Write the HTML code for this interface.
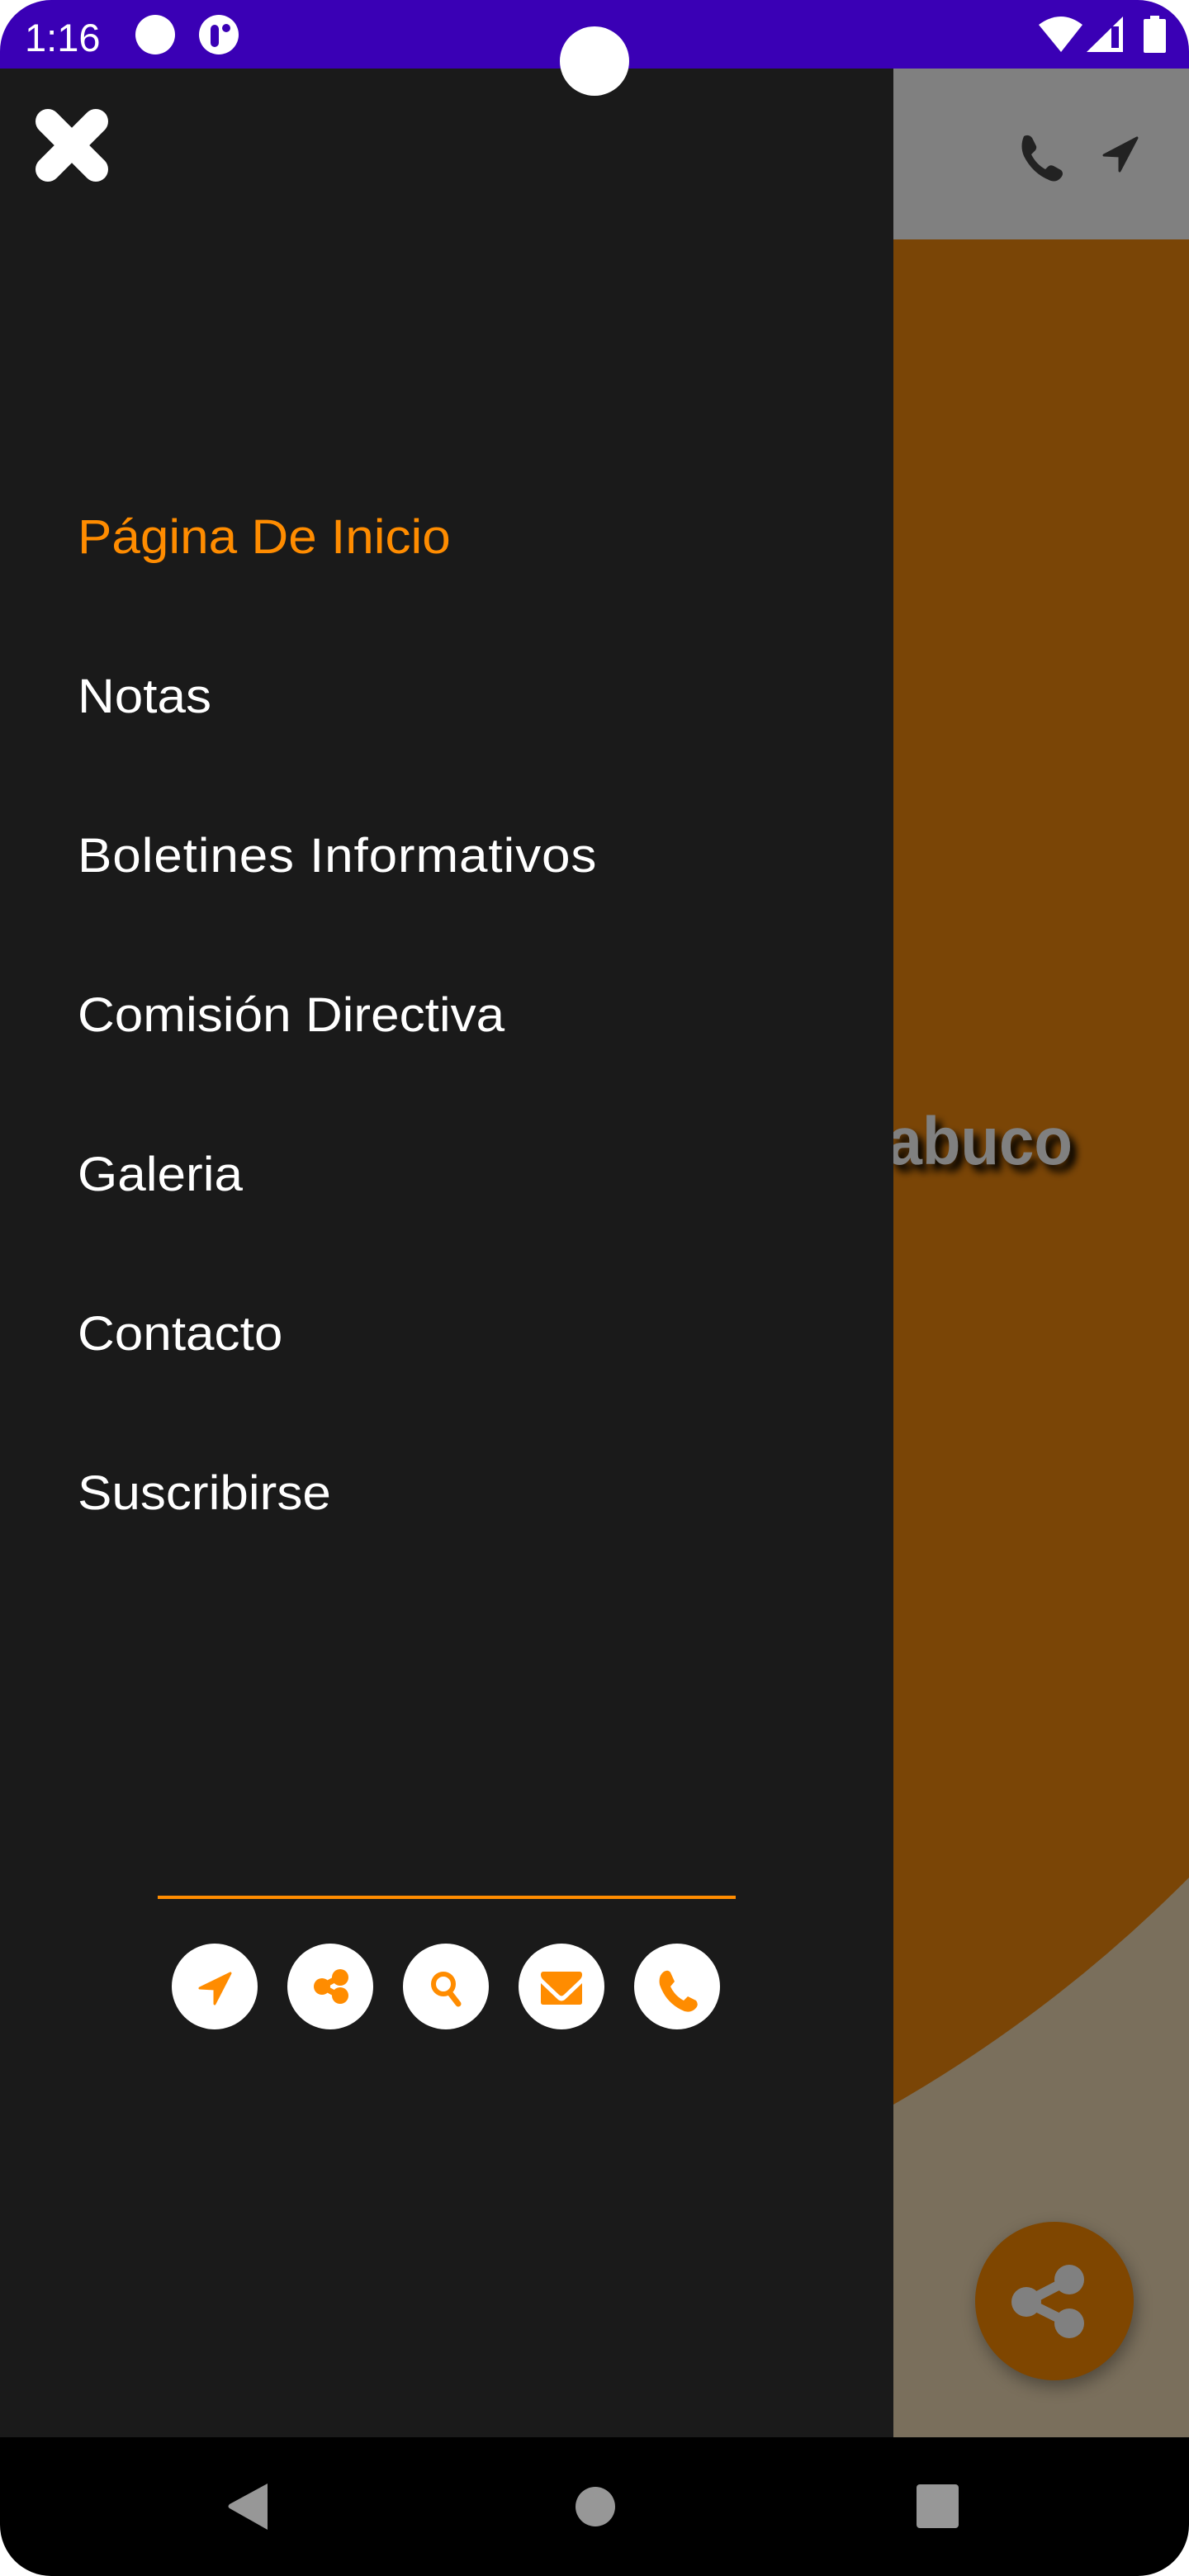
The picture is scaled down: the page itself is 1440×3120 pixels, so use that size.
<!DOCTYPE html>
<html><head><meta charset="utf-8"><style>
html,body{margin:0;padding:0;background:#fff;width:1440px;height:3120px;overflow:hidden}
svg{display:block}
</style></head><body>
<svg width="1440" height="3120" viewBox="0 0 1440 3120" xmlns="http://www.w3.org/2000/svg">
<defs>
<filter id="sh" x="-20%" y="-20%" width="140%" height="160%"><feGaussianBlur stdDeviation="5"/></filter>
<filter id="fs" x="-50%" y="-50%" width="200%" height="200%"><feGaussianBlur stdDeviation="10"/></filter>
<clipPath id="scr"><rect x="0" y="0" width="1440" height="3120" rx="62" ry="62"/></clipPath>
</defs>
<g clip-path="url(#scr)">
<rect x="0" y="83" width="1440" height="2870" fill="#7a6f5c"/>
<path d="M1082,290 L1440,290 L1440,2274 A1700 1700 0 0 1 1082,2549 Z" fill="#7a4506"/>
<rect x="1082" y="83" width="358" height="207" fill="#808080"/>
<path d="M1240,165 q6,-3 10,2 l5,10 q1,4 -3,7 l-3,3 q6,12 17,18 l3,-3 q3,-3 7,-1 l9,5 q4,4 0,9 q-5,6 -12,4 q-22,-8 -33,-30 q-5,-12 0,-24z" fill="#222"/>
<path d="M1337,188 L1377,167 L1356,207 L1356,189 Z" fill="#222" stroke="#222" stroke-width="3" stroke-linejoin="round"/>
<g transform="translate(1299,1410) scale(0.93,1)">
<text x="8" y="8" text-anchor="end" font-family="Liberation Sans, sans-serif" font-weight="bold" font-size="82" fill="#000" filter="url(#sh)">abuco</text>
<text x="0" y="0" text-anchor="end" font-family="Liberation Sans, sans-serif" font-weight="bold" font-size="82" fill="#808080">abuco</text>
</g>
<circle cx="1280" cy="2795" r="96" fill="#000" opacity="0.35" filter="url(#fs)"/>
<circle cx="1277" cy="2787" r="96" fill="#7f4600"/>
<g fill="#808080" stroke="#808080">
<line x1="1243" y1="2788" x2="1295" y2="2761" stroke-width="12"/>
<line x1="1243" y1="2788" x2="1295" y2="2814" stroke-width="12"/>
<circle cx="1295" cy="2761" r="18" stroke="none"/>
<circle cx="1243" cy="2788" r="18" stroke="none"/>
<circle cx="1295" cy="2814" r="18" stroke="none"/>
</g>
<rect x="0" y="83" width="1082" height="2870" fill="#1a1a1a"/>
<line x1="58" y1="147" x2="116" y2="205" stroke="#fff" stroke-width="30" stroke-linecap="round"/>
<line x1="116" y1="147" x2="58" y2="205" stroke="#fff" stroke-width="30" stroke-linecap="round"/>
<g font-family="Liberation Sans, sans-serif" font-size="58" fill="#fff" transform="translate(94,0) scale(1.07,1)">
<text x="0" y="670" fill="#ff8c00">Página De Inicio</text>
<text x="0" y="863">Notas</text>
<text x="0" y="1056" letter-spacing="0.8">Boletines Informativos</text>
<text x="0" y="1249">Comisión Directiva</text>
<text x="0" y="1442">Galeria</text>
<text x="0" y="1635">Contacto</text>
<text x="0" y="1828">Suscribirse</text>
</g>
<rect x="191" y="2296" width="700" height="4" fill="#ff8c00"/>
<g fill="#fff">
<circle cx="260" cy="2406" r="52"/><circle cx="400" cy="2406" r="52"/><circle cx="540" cy="2406" r="52"/><circle cx="680" cy="2406" r="52"/><circle cx="820" cy="2406" r="52"/>
</g>
<g fill="#ff8c00" stroke="#ff8c00">
<path d="M242,2408 L279,2390 L260,2427 L260,2409 Z" stroke-width="3" stroke-linejoin="round"/>
<line x1="390" y1="2406" x2="412" y2="2394" stroke-width="7"/>
<line x1="390" y1="2406" x2="412" y2="2418" stroke-width="7"/>
<circle cx="412" cy="2395" r="10" stroke="none"/><circle cx="390" cy="2406" r="10" stroke="none"/><circle cx="412" cy="2417" r="10" stroke="none"/>
<circle cx="537" cy="2403" r="12" fill="none" stroke-width="6"/>
<line x1="545" y1="2414" x2="555" y2="2427" stroke-width="7" stroke-linecap="round"/>
<path d="M658,2388 h44 q3,0 3,4 q0,3 -3,6 l-19,18 q-3,3 -6,0 l-19,-18 q-3,-3 -3,-6 q0,-4 3,-4z" stroke="none"/>
<path d="M655,2402 l21,20 q4,3 8,0 l21,-20 v23 q0,3 -3,3 h-44 q-3,0 -3,-3z" stroke="none"/>
<path d="M804,2388 q5,-3 8,1 l5,11 l-5,6 q5,11 16,17 l5,-5 l10,5 q4,5 -1,10 q-5,5 -13,3 q-22,-9 -30,-32 q-2,-11 5,-16z" stroke="none"/>
</g>
<rect x="0" y="0" width="1440" height="83" fill="#3a00b5"/>
<text x="30" y="62" font-family="Liberation Sans, sans-serif" font-size="47" fill="#fff">1:16</text>
<circle cx="188" cy="42" r="24" fill="#fff"/>
<circle cx="265" cy="42" r="24" fill="#fff"/>
<rect x="255" y="30" width="10" height="27" rx="5" fill="#3a00b5"/>
<circle cx="274" cy="34" r="5" fill="#3a00b5"/>
<path d="M1258,30 Q1285,10 1311,30 L1285,63 Z" fill="#fff"/>
<path d="M1316,63 L1360,20 L1360,63 Z" fill="#fff"/>
<rect x="1346" y="32" width="9" height="26" fill="#3a00b5"/>
<rect x="1385" y="23" width="27" height="41" rx="2" fill="#fff"/>
<rect x="1393" y="19" width="11" height="6" fill="#fff"/>
<circle cx="720" cy="74" r="42" fill="#fff"/>
<rect x="0" y="2952" width="1440" height="168" fill="#000"/>
<path d="M324,3008 L324,3064 L278,3038 Q275,3036 278,3033 Z" fill="#979797"/>
<circle cx="721" cy="3036" r="24" fill="#979797"/>
<rect x="1110" y="3009" width="51" height="53" rx="4" fill="#979797"/>
</g>
</svg>
</body></html>
